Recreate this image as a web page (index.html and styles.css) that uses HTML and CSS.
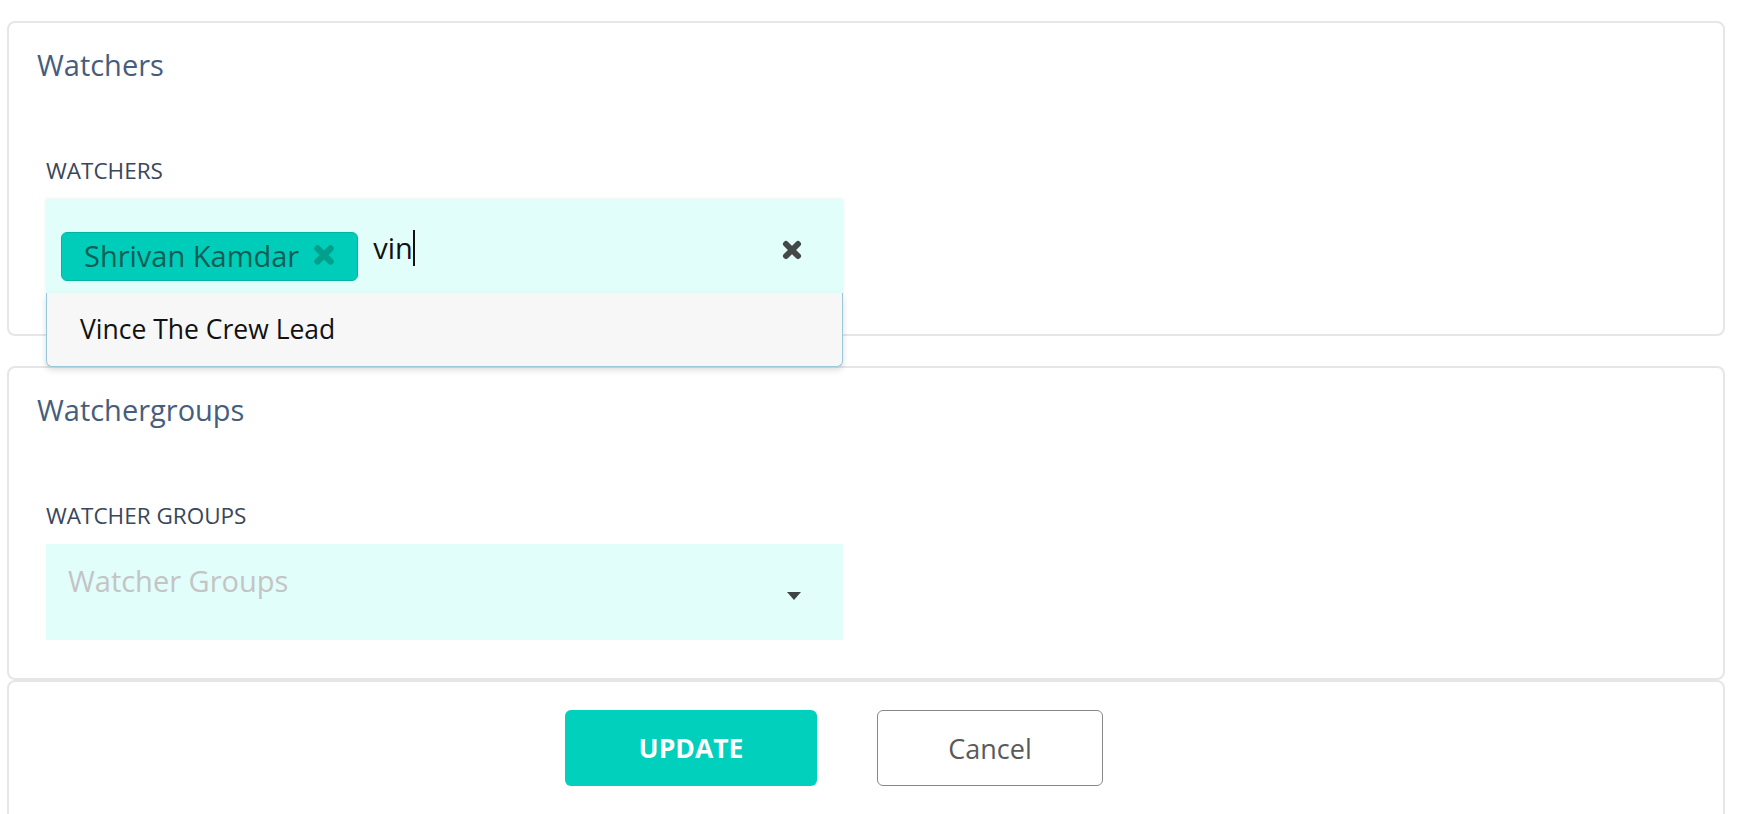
FILE: index.html
```html
<!DOCTYPE html>
<html lang="en">
<head>
<meta charset="utf-8">
<title>Watchers</title>
<link rel="stylesheet" href="styles.css">
</head>
<body>
<div class="page">
  <section class="card card-watchers">
    <h2 class="card-title">Watchers</h2>
    <div class="field">
      <label class="field-label">WATCHERS</label>
      <div class="control-wrap">
        <div class="control control-focused">
          <span class="chip">
            <span class="chip-text">Shrivan Kamdar</span>
            <svg class="chip-x" width="22" height="22" viewBox="0 0 22 22"><path d="M4.5 4.5L17.5 17.5M17.5 4.5L4.5 17.5" stroke="#00a08c" stroke-width="6.5" stroke-linecap="round"/></svg>
          </span>
          <span class="typed">vin</span>
          <svg class="clear-x" width="20" height="20" viewBox="0 0 20 20"><path d="M4 4L16 16M16 4L4 16" stroke="#444848" stroke-width="6" stroke-linecap="round"/></svg>
        </div>
        <div class="menu">
          <div class="menu-option">Vince The Crew Lead</div>
        </div>
      </div>
    </div>
  </section>

  <section class="card card-groups">
    <h2 class="card-title">Watchergroups</h2>
    <div class="field">
      <label class="field-label">WATCHER GROUPS</label>
      <div class="control control-select">
        <span class="placeholder">Watcher Groups</span>
        <svg class="caret" width="14" height="8" viewBox="0 0 14 8"><polygon points="0,0 14,0 7,8" fill="#3e4343"/></svg>
      </div>
    </div>
  </section>

  <section class="card card-actions">
    <div class="actions">
      <button class="btn btn-primary" type="button">UPDATE</button>
      <button class="btn btn-secondary" type="button">Cancel</button>
    </div>
  </section>
</div>
</body>
</html>
```

FILE: styles.css
```css
* { box-sizing: border-box; }

html, body {
  margin: 0;
  padding: 0;
  background: #ffffff;
  overflow: hidden;
}

body {
  font-family: "Open Sans", "Noto Sans", "Liberation Sans", sans-serif;
  color: #222;
}

.page {
  width: 1718px;
  margin-left: 7px;
  padding-top: 21px;
  display: flex;
  flex-direction: column;
}

.card {
  border: 2px solid #e6e6e6;
  border-radius: 8px;
  background: #fff;
  padding: 22px 28px 0 28px;
}

.card-watchers {
  padding-bottom: 41px;
  position: relative;
  z-index: 2;
}

.card-groups {
  margin-top: 30px;
  padding-bottom: 38px;
}

.card-actions {
  margin-top: 0;
  padding: 28px 0 34px 0;
}

.card-title {
  margin: 0;
  font-size: 29px;
  line-height: 40px;
  font-weight: 400;
  color: #465e7b;
}

.field {
  margin-top: 71px;
  margin-left: 9px;
  width: 797px;
}

.field-label {
  display: block;
  font-size: 22.5px;
  line-height: 30px;
  color: #3a4659;
  margin-bottom: 13px;
}

.control-wrap {
  position: relative;
}

.control {
  display: flex;
  align-items: flex-start;
  background: #e1fefb;
  height: 94px;
  padding-left: 15px;
}

.control-focused {
  box-shadow: 0 0 4px rgba(0, 0, 0, 0.08);
}

.chip {
  display: flex;
  align-items: center;
  margin-top: 33px;
  height: 49px;
  padding: 0 22px 0 22px;
  background: #00cdb9;
  border: 1px solid #00b6a3;
  border-radius: 6px;
}

.chip-text {
  font-size: 29px;
  line-height: 43px;
  padding-bottom: 2px;
  color: #0e5e55;
}

.chip-x {
  margin-left: 14px;
  margin-top: -4px;
}

.typed {
  display: inline-block;
  margin-top: 31px;
  margin-left: 15px;
  font-size: 29px;
  line-height: 36px;
  color: #111;
  border-right: 2px solid #111;
  padding-right: 0;
}

.clear-x {
  margin-left: auto;
  margin-right: 41px;
  margin-top: 41px;
}

.menu {
  position: absolute;
  top: 94px;
  left: 0;
  right: 0;
  background: #f7f7f7;
  border: 1px solid #96c9dc;
  border-top: none;
  border-radius: 0 0 6px 6px;
  box-shadow: 0 3px 6px rgba(0, 0, 0, 0.14);
  padding: 18px 33px 19px 33px;
}

.menu-option {
  font-size: 26.5px;
  line-height: 36px;
  color: #111;
}

.control-select {
  height: 96px;
  padding-left: 22px;
  padding-top: 17px;
}

.placeholder {
  font-size: 29px;
  line-height: 40px;
  color: #c4c4c4;
}

.caret {
  margin-left: auto;
  margin-right: 42px;
  margin-top: 31px;
}

.actions {
  display: flex;
  justify-content: center;
  gap: 60px;
  padding-right: 64px;
}

.btn {
  height: 76px;
  border-radius: 6px;
  font-family: "Open Sans", "Noto Sans", "Liberation Sans", sans-serif;
  cursor: pointer;
}

.btn-primary {
  width: 252px;
  background: #00d0bc;
  border: none;
  color: #ffffff;
  font-weight: 700;
  font-size: 26.5px;
}

.btn-secondary {
  width: 226px;
  background: #ffffff;
  border: 1.5px solid #888888;
  color: #5a5a5a;
  font-weight: 400;
  font-size: 27px;
}
```
